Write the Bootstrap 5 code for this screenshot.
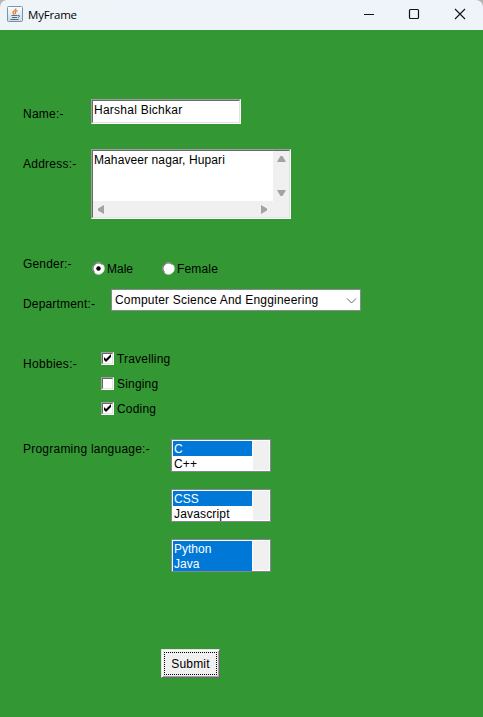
<!DOCTYPE html>
<html lang="en">
<head>
<meta charset="utf-8">
<meta name="viewport" content="width=device-width, initial-scale=1">
<title>MyFrame</title>
<link href="https://cdn.jsdelivr.net/npm/bootstrap@5.3.0/dist/css/bootstrap.min.css" rel="stylesheet">
<style>
body{background:#339833;color:#000;font:12px/16px "Liberation Sans",Arial,sans-serif;letter-spacing:.17px;height:717px;overflow:hidden}
.titlebar{height:30px;background:linear-gradient(90deg,#eff4f9,#eff3fa);border-radius:7px 7px 0 0;font-family:"Open Sans","Noto Sans",sans-serif;font-size:11.5px;letter-spacing:-.2px}
.corners{background:#b5b5b5}
.app-icon{margin:-2px 5px 0 7px}
.win-btn{width:46px;height:30px}
.form-line{padding-left:23px}
.caption{width:68px;padding-top:7px;letter-spacing:.25px}
.caption-dept{width:88px;padding-top:7px}
.caption-hob{width:78px;padding-top:5px;letter-spacing:.3px}
.caption-lang{width:148px;padding-top:2px;letter-spacing:.23px}
.sunken{background:#fff;border:1px solid;border-color:#a0a0a0 #fff #fff #a0a0a0}
.sunken-in{border:1px solid;border-color:#696969 #e3e3e3 #e3e3e3 #696969;height:100%}
.sunken-in .value{padding:1px 0 0 1px}
.line-name{margin-top:69px}.line-name .sunken{width:150px;height:25px;letter-spacing:.25px}
.line-addr{margin-top:25px}.line-addr .sunken{width:200px;height:70px;letter-spacing:.1px}
.track{background:#f0f0f0}
.track-v{width:16px;height:50px;padding:5px 0}
.track-h{height:16px;padding:0 22px 0 5px}
.line-gender{margin-top:37px;height:21px}
.line-gender .caption{padding-top:0;width:69px;letter-spacing:.17px}
.choice{height:16px;margin-top:5px}
.choice svg{margin:-2px 2px 0 0}
.first-choice{width:70px;letter-spacing:0}
.line-dept{margin-top:12px;height:22px}
.combo{width:250px;height:22px;background:#fff;border:1px solid #868a91;padding:2px 0 0 3px;letter-spacing:.2px}
.combo-arrow{width:17px;height:18px}
.line-hob{margin-top:40px}
.tick{width:13px;height:13px;margin:1px 3px 0 0}
.tick .sunken-in{display:block}
.hobby{height:16px;margin-bottom:9px;letter-spacing:.18px}
.line-lang{margin-top:13px}
.pick-list{width:100px;height:33px;background:#fff;border:1px solid #828790;padding:1px;line-height:15px}
.pick-list .options{width:79px}
.pick-list .options div{height:15px;padding-left:1px;padding-top:1px}
.chosen{background:#0078d7;color:#fff;letter-spacing:0}
.pick-list .track{width:16px;height:29px}
.lists{gap:17px}
.submit-line{margin:77px 0 0 161px}
.push{width:59px;height:29px;padding:2px;background:#f0f0f0;border:1px solid;border-color:#e3e3e3 #696969 #696969 #e3e3e3;box-shadow:inset 1px 1px #fff,inset -1px -1px #a0a0a0;letter-spacing:.17px;font-size:12px;line-height:16px;color:#000}
.push span{display:block;width:53px;height:23px;border:1px dotted #000;padding-top:3px}
</style>
</head>
<body>
<div class="corners">
<header class="titlebar d-flex align-items-center">
<svg class="app-icon" width="16" height="16" viewBox="0 0 16 16"><defs><linearGradient id="g" x2="0" y2="1"><stop stop-color="#fff"/><stop offset="1" stop-color="#ccd8e2"/></linearGradient></defs><rect x=".5" y=".5" width="15" height="15" rx="1" fill="url(#g)" stroke="#7894a9"/><path d="M9 2.500Q9 4 7 5t.2 3.500M10.500 4.500Q7.500 5.500 8.700 8" fill="none" stroke="#e77b2b" stroke-width="1.300"/><path d="M4.500 9.500h6M5 11.500h5M3.500 13.500h8M10.800 9.500q2-.5 1.700.8-.3 1-1.700 1.200" fill="none" stroke="#47718e"/></svg>
<span class="me-auto">MyFrame</span>
<span class="win-btn"><svg width="46" height="30"><path d="M19 14.500h10" stroke="#111"/></svg></span>
<span class="win-btn"><svg width="46" height="30"><rect x="18.500" y="9.500" width="9" height="9" rx="1" fill="none" stroke="#111" stroke-width="1.200"/></svg></span>
<span class="win-btn"><svg width="46" height="30"><path d="M18 9l10 10M28 9L18 19" stroke="#111" stroke-width="1.100"/></svg></span>
</header>
</div>
<main>
<div class="form-line line-name d-flex"><div class="caption">Name:-</div><div class="sunken"><div class="sunken-in"><div class="value">Harshal Bichkar</div></div></div></div>
<div class="form-line line-addr d-flex"><div class="caption">Address:-</div>
<div class="sunken"><div class="sunken-in">
<div class="d-flex"><div class="value flex-grow-1">Mahaveer nagar, Hupari</div>
<div class="track track-v d-flex flex-column align-items-center justify-content-between"><svg width="9" height="7"><path d="M3.500 0h2L9 6H0z" fill="#a3a3a3"/></svg><svg width="9" height="7"><path d="M0 1h9L5.500 7h-2z" fill="#a3a3a3"/></svg></div></div>
<div class="track track-h d-flex align-items-center justify-content-between"><svg width="7" height="9"><path d="M0 3.500L6 0v9L0 5.500z" fill="#a3a3a3"/></svg><svg width="7" height="9"><path d="M1 0l6 3.500v2L1 9z" fill="#a3a3a3"/></svg></div>
</div></div></div>
<div class="form-line line-gender d-flex"><div class="caption">Gender:-</div>
<div class="choice first-choice d-flex align-items-center"><svg width="13" height="13"><circle cx="6.500" cy="6.500" r="5.700" fill="#fff" stroke="#eee"/><path d="M2.500 10.500A5.600 5.600 0 0 1 10.500 2.500" fill="none" stroke="#777" stroke-width="1.300"/><circle cx="6.500" cy="6.500" r="2.200"/></svg>Male</div>
<div class="choice d-flex align-items-center"><svg width="13" height="13"><circle cx="6.500" cy="6.500" r="5.700" fill="#fff" stroke="#eee"/><path d="M2.500 10.500A5.600 5.600 0 0 1 10.500 2.500" fill="none" stroke="#777" stroke-width="1.300"/></svg>Female</div></div>
<div class="form-line line-dept d-flex"><div class="caption-dept">Department:-</div><div class="combo d-flex"><span class="flex-grow-1">Computer Science And Enggineering</span><svg class="combo-arrow" width="17" height="18"><path d="M4 6.500l4.500 4.500L13 6.500" fill="none" stroke="#666"/></svg></div></div>
<div class="form-line line-hob d-flex"><div class="caption-hob">Hobbies:-</div>
<div>
<div class="hobby d-flex"><span class="tick sunken"><span class="sunken-in"><svg class="d-block" width="9" height="9"><path d="M1 3v3l2 2 5-5V0L3 5z"/></svg></span></span>Travelling</div>
<div class="hobby d-flex"><span class="tick sunken"><span class="sunken-in"></span></span>Singing</div>
<div class="hobby d-flex"><span class="tick sunken"><span class="sunken-in"><svg class="d-block" width="9" height="9"><path d="M1 3v3l2 2 5-5V0L3 5z"/></svg></span></span>Coding</div>
</div></div>
<div class="form-line line-lang d-flex"><div class="caption-lang">Programing language:-</div>
<div class="lists d-flex flex-column">
<div class="pick-list d-flex justify-content-between"><div class="options"><div class="chosen">C</div><div>C++</div></div><div class="track"></div></div>
<div class="pick-list d-flex justify-content-between"><div class="options"><div class="chosen">CSS</div><div>Javascript</div></div><div class="track"></div></div>
<div class="pick-list d-flex justify-content-between"><div class="options"><div class="chosen">Python</div><div class="chosen">Java</div></div><div class="track"></div></div>
</div></div>
<div class="submit-line"><button type="button" class="push d-block"><span>Submit</span></button></div>
</main>
<script src="https://cdn.jsdelivr.net/npm/bootstrap@5.3.0/dist/js/bootstrap.bundle.min.js"></script>
</body>
</html>
